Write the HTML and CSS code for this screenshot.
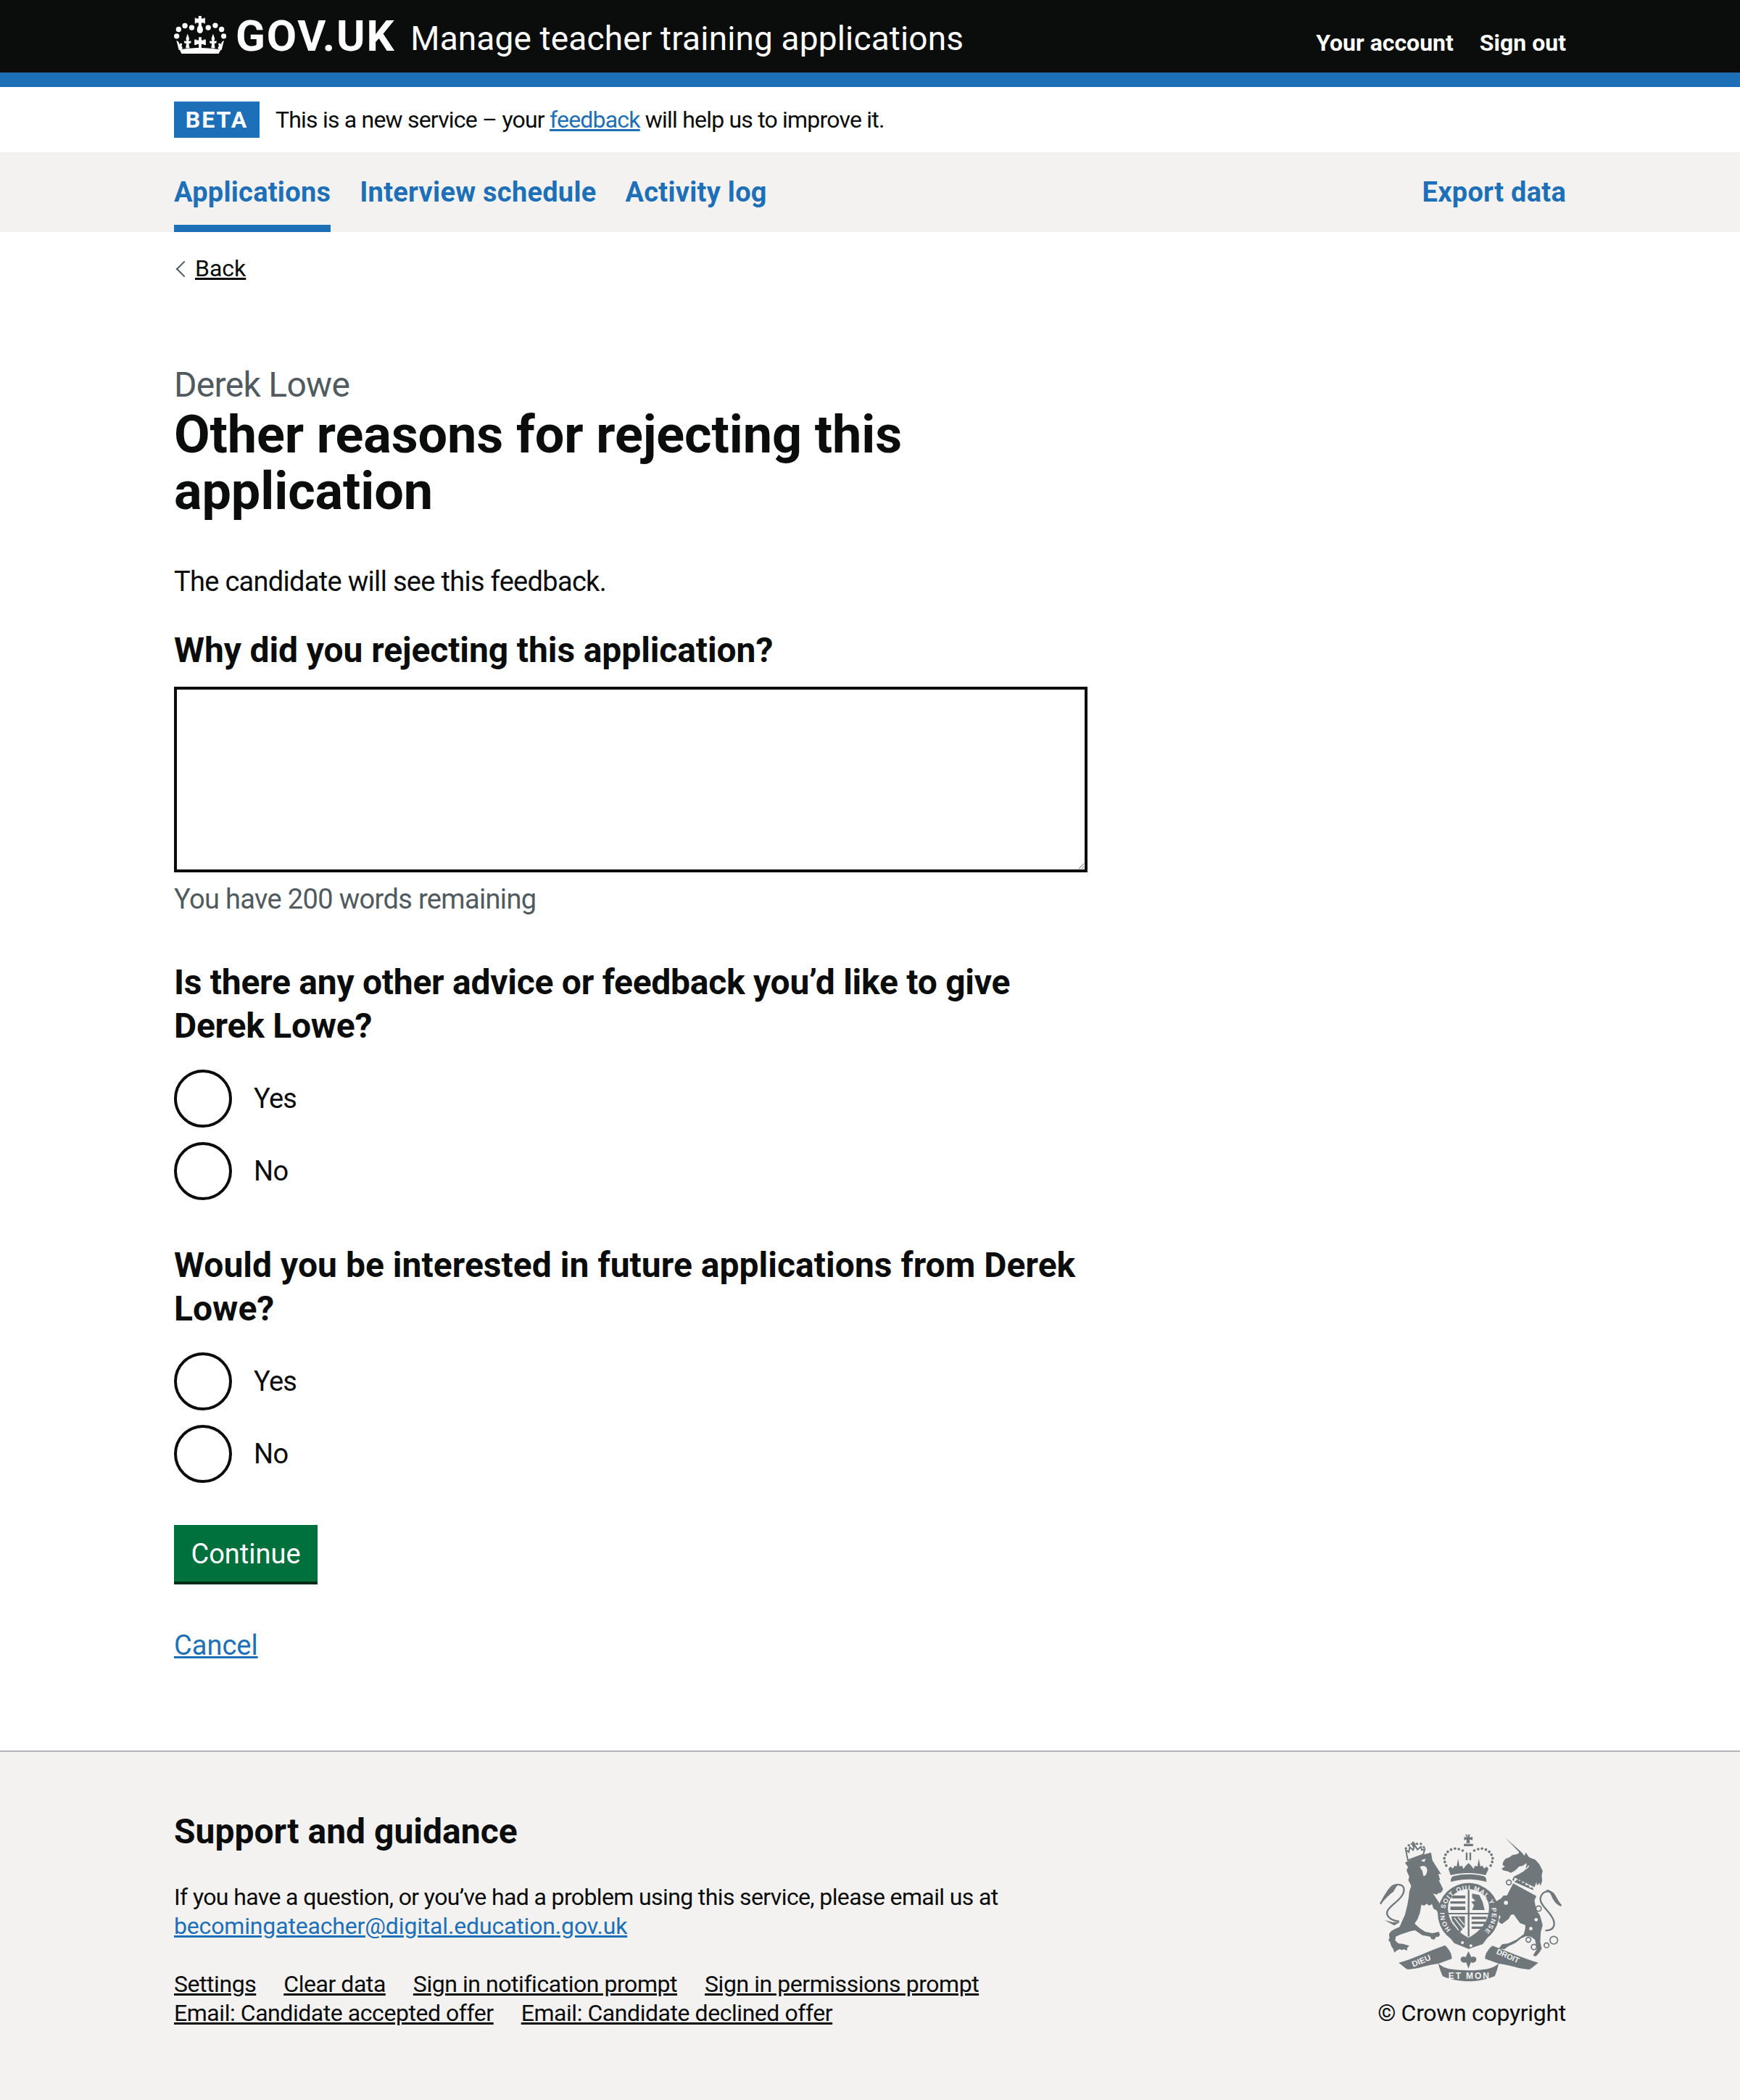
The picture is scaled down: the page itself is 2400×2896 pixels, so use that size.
FILE: index.html
```html
<!DOCTYPE html>
<html lang="en">
<head>
  <meta charset="UTF-8">
  <meta name="viewport" content="width=device-width, initial-scale=1.0">
  <title>Other reasons for rejecting this application</title>
  <link rel="stylesheet" href="styles.css">
</head>
<body>
<header class="site-header">
  <div class="container header-row">
    <a class="logo" href="#">
      <svg class="crown" viewBox="120 65 215 155" width="72" height="52" aria-hidden="true">
        <g fill="#fff">
          <circle cx="131" cy="148" r="11"/><circle cx="139" cy="120" r="11"/><circle cx="165" cy="105" r="11"/><circle cx="193" cy="113" r="11"/>
          <circle cx="261" cy="113" r="11"/><circle cx="290" cy="104" r="11"/><circle cx="316" cy="120" r="11"/><circle cx="325" cy="148" r="11"/>
          <path d="M221 65h12v10h11v-3h4v24h-4v-3h-11v12c5 6 7 14 6 20-1 7-6 11-12 11s-11-4-12-11c-1-6 1-14 6-20V93h-11v3h-4V72h4v3h11z"/>
          <path d="M143 204c55-10 115-10 170 0l-9 16H151z"/>
          <path d="M130 166l10 6 1 9 7-4 6 3-3 9 5 8-6 7-10 1z"/>
          <path d="M326 166l-10 6-1 9-7-4-6 3 3 9-5 8 6 7 10 1z"/>
          <path d="M176 138l7 20-3 11 11-1-2 9-8 1 3 19-8 1-8-1 3-19-8-1-2-9 11 1-3-11z"/>
          <path d="M281 138l7 20-3 11 11-1-2 9-8 1 3 19-8 1-8-1 3-19-8-1-2-9 11 1-3-11z"/>
          <path d="M222 152h11v13h9v-3h9v22h-9v-3h-9v16h-11v-16h-9v3h-9v-22h9v3h9z"/>
        </g>
      </svg>
      <span class="logo-text">GOV.UK</span>
    </a>
    <a class="service-name" href="#">Manage teacher training applications</a>
    <nav class="account-nav">
      <a href="#">Your account</a>
      <a href="#">Sign out</a>
    </nav>
  </div>
</header>

<div class="container phase-banner">
  <strong class="tag">BETA</strong>
  <span>This is a new service – your <a class="link" href="#">feedback</a> will help us to improve it.</span>
</div>

<nav class="primary-nav">
  <div class="container primary-row">
    <a class="current" href="#">Applications</a>
    <a href="#">Interview schedule</a>
    <a href="#">Activity log</a>
    <a class="push-right" href="#">Export data</a>
  </div>
</nav>

<div class="container">
  <a class="back-link" href="#">Back</a>

  <main class="main-col">
    <span class="caption">Derek Lowe</span>
    <h1>Other reasons for rejecting this application</h1>
    <p class="body-text">The candidate will see this feedback.</p>

    <form>
      <label class="question" for="reason">Why did you rejecting this application?</label>
      <textarea id="reason" class="textarea"></textarea>
      <div class="hint">You have 200 words remaining</div>

      <fieldset>
        <legend class="legend-tight">Is there any other advice or feedback you’d like to give Derek Lowe?</legend>
        <label class="radio"><input type="radio" name="advice"><span>Yes</span></label>
        <label class="radio"><input type="radio" name="advice"><span>No</span></label>
      </fieldset>

      <fieldset>
        <legend>Would you be interested in future applications from Derek Lowe?</legend>
        <label class="radio"><input type="radio" name="future"><span>Yes</span></label>
        <label class="radio"><input type="radio" name="future"><span>No</span></label>
      </fieldset>

      <button class="button" type="button">Continue</button>
    </form>

    <a class="link cancel" href="#">Cancel</a>
  </main>
</div>

<footer class="site-footer">
  <div class="container footer-row">
    <div class="footer-main">
      <h2>Support and guidance</h2>
      <p>If you have a question, or you’ve had a problem using this service, please email us at<br>
        <a class="link email" href="#">becomingateacher@digital.education.gov.uk</a></p>
      <ul class="footer-links">
        <li><a href="#">Settings</a></li>
        <li><a href="#">Clear data</a></li>
        <li><a href="#">Sign in notification prompt</a></li>
        <li><a href="#">Sign in permissions prompt</a></li>
        <li><a href="#">Email: Candidate accepted offer</a></li>
        <li><a href="#">Email: Candidate declined offer</a></li>
      </ul>
    </div>
    <div class="footer-meta">
      <svg class="arms" viewBox="130 95 752 612" width="251" height="204" aria-hidden="true">
        <g fill="#6f777b">
          <!-- lion -->
          <path d="M234 214c30-16 72-34 108-42l6 33 16 26 20 31-12-2 8 26-6 0 18 38-8 14-12 2-6 6-16-4 62 92-13 12-25-12-8-22-14-8-6-18-12 6-10-8-10 8-12-4-6 34-10 26-12 18 22 20 22 14 30 6 26-6 5 12-5 8-12 2-6 10-12-2-6-10-32-6-30-20-20 4-42 14-18 8-2 16 12 12 20 2 26 8-8 8-2 12-12-6-8 4-10-4-12 6-10 8-4-14-8-12-6-18-6-6 4-12-2-14 10-14 20-10 14-6 12-28 10-22 10-40 6-34 2-22 8-24-12-24 4-14-10-22 0-10 6-6z"/>
          <path d="M238 162l12 8 4-20 14 12 6-20 12 18 14-12 4 14 12-4-6 22-64 24z" fill="none" stroke="#6f777b" stroke-width="6"/>
          <path d="M264 127h8v6h6v7h-6v8h-8v-8h-6v-7h6z"/>
          <g>
            <circle cx="238" cy="155" r="5"/><circle cx="250" cy="142" r="5"/><circle cx="284" cy="136" r="5"/><circle cx="300" cy="136" r="5"/><circle cx="312" cy="150" r="5"/>
          </g>
          <!-- unicorn -->
          <path d="M648 110l70 62 10 14 6-14 14 20 26 10 16 18 14 28-4 18 2 24-8 22-2-14-12 10-2-14-8 22-4 20-88-50 6-14 24-12 20-12 8-18 2-14-18 12-14 2-14 16-20 10-12-6-20-4-6-8 14-8-10-6 2-12 10-14 16-6 14-10 14-2 10-4 2-6z"/>
          <path d="M682 300l96 52-8 18 8 42 14 18 12 42-8 30-2 40 6 28-10 16-14 16-12-4 16-26-8-40-18-12-18-2-22 10-22 18-30 14-16 12-24-2 14-18 26-4 34-16 30-22 6-24 0-14-22-8-16-22-10-14-12 2-8 16-28 22-12-6-2-10 8-14-26-30-32-16 14-18 22 2 24-14 10-12 14 0z"/>
          <!-- tails -->
          <path d="M210 458c-42-8-60-28-45-50 20-26 65-48 65-83 0-20-25-25-45-15-20 10-35 50-53 75" fill="none" stroke="#6f777b" stroke-width="7"/>
          <path d="M134 385c4-22 18-42 32-54 10-10 24-22 40-26-10 10-14 20-20 30-12 6-34 30-52 50zM150 452l40 22 22-14-30 0z"/>
          <path d="M815 495c40 0 45-30 25-60-15-25-50-50-45-75 5-25 30-35 50-20 12 10 20 40 36 52" fill="none" stroke="#6f777b" stroke-width="7"/>
          <path d="M880 395c-16-6-30-20-38-40-4-12-12-22-24-30 14 0 28 10 34 24 6 18 16 32 28 46z"/>
          <!-- crown -->
          <path d="M484 97h7l2 13 3-13h7l-2 13 13-3v14l-13-3 2 15h-15l2-15-11 3v-14l11 3zM478 136h38v10h-38z"/>
          <path d="M486 172h7v32h-7zM501 172h7v32h-7z"/>
          <g>
            <circle cx="473" cy="164" r="5.5"/><circle cx="457" cy="158" r="5.5"/><circle cx="441" cy="156" r="5.5"/><circle cx="425" cy="160" r="5.5"/><circle cx="411" cy="169" r="5.5"/><circle cx="402" cy="181" r="5.5"/><circle cx="397" cy="196" r="5.5"/><circle cx="399" cy="211" r="5.5"/><circle cx="405" cy="226" r="5.5"/>
            <circle cx="521" cy="164" r="5.5"/><circle cx="537" cy="158" r="5.5"/><circle cx="553" cy="156" r="5.5"/><circle cx="569" cy="160" r="5.5"/><circle cx="583" cy="169" r="5.5"/><circle cx="592" cy="181" r="5.5"/><circle cx="597" cy="196" r="5.5"/><circle cx="595" cy="211" r="5.5"/><circle cx="589" cy="226" r="5.5"/>
          </g>
          <path d="M414 240l8-10 10 8 8-12 8 4 6-32 6 32 10-4 6 14 10-14 11-10 11 10 10 14 6-14 10 4 6-32 6 32 8-4 8 12 10-8 8 10-12 26c-45-12-100-12-145 0z"/>
          <path d="M425 294c-3-10 0-20 10-24 40-10 85-10 125 0 10 4 13 14 10 24-40-14-105-14-145 0z"/>
          <!-- garter -->
          <circle cx="497" cy="425" r="127"/>
        </g>
        <path d="M412 400c0-40 35-76 85-76s85 36 85 76c0 60-40 100-85 125-45-25-85-65-85-125z" fill="#f3f2f1"/>
        <g fill="#6f777b">
          <rect x="494" y="325" width="7" height="195"/>
          <rect x="412" y="422" width="172" height="6"/>
          <path d="M428 350h56v12h-56zM422 374h62v10h-62zM422 396h62v14h-62z"/>
          <path d="M512 342l30 6 14 30 8 32-52 0 8-20-12-14 18-4-14-12z"/>
          <path d="M510 438h62v10h-62zM510 458h56v10h-56zM510 478h46v10h-46z"/>
          <path d="M426 436h56v42l-22 26c-22-20-30-44-34-68z"/>
        </g>
        <path d="M438 442l36 46M454 440l26 32M430 458l26 36" stroke="#f3f2f1" stroke-width="4" fill="none"/>
        <path d="M418 522l20 25 60 24 58-20 20-27-20 4-58 16-60-16z" fill="#6f777b"/>
        <circle cx="472" cy="545" r="6" fill="#f3f2f1"/><circle cx="507" cy="558" r="6" fill="#f3f2f1"/>
        <g fill="#f3f2f1" stroke="#6f777b" stroke-width="5">
          <circle cx="664" cy="296" r="10"/><circle cx="652" cy="380" r="11"/><circle cx="787" cy="404" r="11"/>
          <circle cx="745" cy="533" r="10"/><circle cx="768" cy="563" r="11"/><circle cx="820" cy="556" r="10"/><circle cx="850" cy="535" r="16"/>
        </g>
        <circle cx="777" cy="450" r="7" fill="#f3f2f1"/><circle cx="755" cy="487" r="7" fill="#f3f2f1"/>
        <path d="M300 205l20-8-6 14zM296 232c14-8 28-4 30 10 0 14-4 26-14 28-6-8-2-18-8-24z" fill="#f3f2f1"/>
        <path d="M692 244c22 4 48 0 54-18" fill="none" stroke="#f3f2f1" stroke-width="4"/>
        <path d="M688 276l96 46-8 22-94-46z" fill="#f3f2f1"/>
        <path d="M694 288l10-8 2 10 12-4 2 12 12-2 2 12 12-2 4 12 12-2 4 12-80-34z" fill="#6f777b"/>
        <g fill="#6f777b">
          <!-- motto ribbon -->
          <path d="M208 628C270 612 340 575 400 556C418 572 430 596 428 612L372 632C330 636 285 655 245 656C232 648 220 636 208 628Z"/>
          <path d="M786 628C724 612 654 578 596 558C576 574 564 596 566 612L622 632C664 636 709 655 749 656C762 648 774 636 786 628Z"/>
          <path d="M372 632C385 642 400 650 418 654C470 662 525 662 576 654C592 650 610 642 622 632C618 650 612 668 606 684C540 712 455 712 390 684C384 668 376 650 372 632Z"/>
          <path d="M497 580l12 26c6-6 24-4 20 12-3 10-14 12-22 8l-10 26-10-26c-8 4-20 2-22-8-4-16 14-18 20-12z"/>
        </g>
        <g fill="#f3f2f1" font-family="'Liberation Sans', sans-serif" font-weight="700">
          <path id="ring-text" d="M424.5 491.6A98 98 0 1 1 557 502" fill="none"/>
          <text font-size="27"><textPath href="#ring-text" textLength="462">HONI SOIT QUI MAL Y PENSE</textPath></text>
          <text x="414" y="695" font-size="36" textLength="168">ET MON</text>
          <text x="268" y="646" font-size="34" transform="rotate(-22 268 646)">DIEU</text>
          <text x="610" y="590" font-size="32" transform="rotate(24 610 590)">DROIT</text>
        </g>
      </svg>
      <a class="copyright" href="#">© Crown copyright</a>
    </div>
  </div>
</footer>
</body>
</html>
```

FILE: styles.css
```css
:root {
  --black: #0b0c0c;
  --blue: #1d70b8;
  --grey: #505a5f;
  --panel: #f3f2f1;
}

* { box-sizing: border-box; }

body {
  margin: 0;
  font-family: Roboto, Arial, sans-serif;
  font-size: 38px;
  line-height: 50px;
  color: var(--black);
  background: #fff;
}

a { color: inherit; }

.container {
  width: 1920px;
  margin: 0 auto;
}

.link { color: var(--blue); }

/* header */
.site-header {
  height: 120px;
  background: var(--black);
  border-bottom: 20px solid var(--blue);
  color: #fff;
}
.header-row {
  display: flex;
  align-items: center;
  height: 100px;
}
.header-row a { color: #fff; text-decoration: none; }
.logo {
  display: flex;
  align-items: center;
  gap: 13px;
  margin-right: 21px;
}
.crown { display: block; margin-top: -4px; }
.logo-text {
  font-size: 60px;
  font-weight: 700;
  line-height: 60px;
  letter-spacing: 1.8px;
}
.service-name {
  font-size: 46px;
  line-height: 60px;
  letter-spacing: 0.15px;
  margin-top: 5px;
}
.account-nav {
  margin-left: auto;
  display: flex;
  gap: 36px;
  font-size: 32px;
  font-weight: 700;
  line-height: 40px;
  padding-top: 17px;
}

/* phase banner */
.phase-banner {
  display: flex;
  align-items: center;
  gap: 22px;
  height: 90px;
  font-size: 32px;
  line-height: 40px;
  letter-spacing: -0.8px;
}
.tag {
  background: var(--blue);
  color: #fff;
  width: 118px;
  height: 50px;
  font-size: 32px;
  line-height: 50px;
  text-align: center;
  letter-spacing: 2px;
}

/* primary navigation */
.primary-nav {
  background: var(--panel);
  height: 110px;
}
.primary-row {
  display: flex;
  gap: 40px;
  height: 110px;
  font-size: 38px;
  font-weight: 700;
  letter-spacing: 0.26px;
}
.primary-row a {
  color: var(--blue);
  text-decoration: none;
  padding-top: 30px;
}
.primary-row .current { border-bottom: 10px solid var(--blue); }
.primary-row .push-right { margin-left: auto; }

.back-link {
  display: inline-block;
  position: relative;
  margin-top: 30px;
  padding-left: 29px;
  font-size: 32px;
  line-height: 40px;
}
.back-link::before {
  content: "";
  position: absolute;
  left: 6px;
  top: 13px;
  width: 14px;
  height: 14px;
  border-left: 2px solid #505a5f;
  border-bottom: 2px solid #505a5f;
  transform: rotate(45deg);
}

/* main column */
.main-col {
  width: 1260px;
  padding-top: 108px;
  padding-bottom: 120px;
}
.caption {
  display: block;
  font-size: 48px;
  line-height: 60px;
  letter-spacing: -0.7px;
  color: var(--grey);
}
h1 {
  margin: 0 0 60px;
  font-size: 72px;
  line-height: 78px;
  font-weight: 700;
  letter-spacing: -0.1px;
}
.body-text {
  margin: 0 0 40px;
  letter-spacing: -0.7px;
}
.question,
legend {
  display: block;
  font-size: 48px;
  line-height: 60px;
  font-weight: 700;
  letter-spacing: 0.03px;
}
.question {
  margin-bottom: 20px;
  letter-spacing: -0.1px;
}
legend.legend-tight { letter-spacing: -0.26px; }
.textarea {
  display: block;
  width: 1260px;
  height: 256px;
  border: 4px solid var(--black);
  border-radius: 0;
  background: #fff;
  font: inherit;
}
.hint {
  margin-top: 12px;
  color: var(--grey);
  letter-spacing: -0.66px;
}
fieldset {
  border: 0;
  margin: 60px 0 0;
  padding: 0;
}
legend {
  padding: 0;
  margin-bottom: 30px;
}
.radio {
  display: flex;
  align-items: center;
  gap: 30px;
  height: 80px;
  margin-bottom: 20px;
  letter-spacing: -0.7px;
}
.radio:last-child { margin-bottom: 0; }
.radio input {
  appearance: none;
  width: 80px;
  height: 80px;
  margin: 0;
  border: 4px solid var(--black);
  border-radius: 50%;
  background: #fff;
}
.button {
  display: block;
  margin-top: 58px;
  width: 198px;
  height: 78px;
  padding: 2px 0 0;
  border: 0;
  background: #00703c;
  box-shadow: 0 4px 0 #002d18;
  color: #fff;
  font: inherit;
}
.cancel {
  display: block;
  margin-top: 63px;
  width: fit-content;
}

/* footer */
.site-footer {
  background: var(--panel);
  border-top: 2px solid #b1b4b6;
  padding: 80px 0 100px;
  font-size: 32px;
  line-height: 40px;
}
.footer-row {
  display: flex;
  justify-content: space-between;
  align-items: flex-end;
}
.footer-main { width: 1280px; }
.site-footer h2 {
  margin: 0 0 40px;
  font-size: 48px;
  line-height: 60px;
  font-weight: 700;
}
.site-footer p {
  margin: 0 0 40px;
  letter-spacing: -0.62px;
}
.email { letter-spacing: -0.16px; }
.footer-links {
  list-style: none;
  margin: 0;
  padding: 0;
  display: flex;
  flex-wrap: wrap;
  column-gap: 38px;
  letter-spacing: -0.45px;
}
.footer-meta {
  display: flex;
  flex-direction: column;
  align-items: flex-end;
}
.arms {
  display: block;
  margin: 0 6px 23px 0;
}
.copyright {
  text-decoration: none;
  letter-spacing: -0.3px;
}
```
